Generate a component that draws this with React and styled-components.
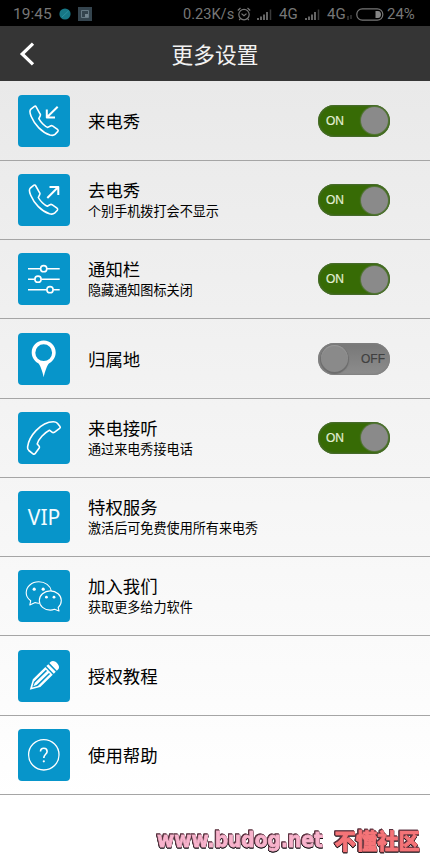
import React, { useState } from 'react';
import styled, { createGlobalStyle } from 'styled-components';

const PHONE =
  'M16.5 11.4L12.9 14.2C11.6 15.3 11.8 18.2 13.2 21.5C16.5 29.5 24 37.5 32 40C34.5 40.7 36 40.3 37 39.4L39.9 36.4C40.4 35.6 40.3 35 39.5 34.4L34.5 30.9C33.8 30.5 33 30.6 32.4 31L29.8 32.4C27 31.5 22.5 27 20.8 23.7L22.3 20.6C22.6 20 22.5 19.4 22 18.8L18 11.7C17.6 11 17 11 16.5 11.4Z';

function Icon({ name }) {
  switch (name) {
    case 'incoming':
      return (
        <Glyph viewBox="0 0 52 52">
          <path d={PHONE} />
          <path strokeWidth="2" d="M39.7 11.7L29 22.2M28.8 14.5V22.4H37" />
        </Glyph>
      );
    case 'outgoing':
      return (
        <Glyph viewBox="0 0 52 52">
          <path d={PHONE} transform="translate(-.5 -.2)" />
          <path strokeWidth="2" d="M29.3 24L40 13.3M31.5 13H40.3V21" />
        </Glyph>
      );
    case 'sliders':
      return (
        <Glyph viewBox="0 0 52 52">
          <path d="M10 15.7H22.6M28.8 15.7H41.7M10 26.2H16.8M23.2 26.2H41.7M10 36.7H28.8M35.2 36.7H41.7" />
          <circle cx="25.7" cy="15.7" r="3.1" />
          <circle cx="20" cy="26.2" r="3.1" />
          <circle cx="32" cy="36.7" r="3.1" />
        </Glyph>
      );
    case 'pin':
      return (
        <Glyph viewBox="0 0 52 52">
          <path
            fill="#fff"
            fillRule="evenodd"
            stroke="none"
            d="M25.7 7.6C19 7.6 13.7 12.9 13.7 19.5C13.7 24.5 16.7 28.2 20.2 30.3C22.2 31.8 24.4 38.5 25.7 44.2C27 38.5 29.2 31.8 31.2 30.3C34.8 28.2 37.7 24.5 37.7 19.5C37.7 12.9 32.4 7.6 25.7 7.6ZM25.7 11.3A8.4 8.4 0 0 1 25.7 28.1A8.4 8.4 0 0 1 25.7 11.3Z"
          />
        </Glyph>
      );
    case 'answer':
      return (
        <Glyph viewBox="0 0 52 52">
          <path d="M35.3 9.8C29.8 9.8 23 13.4 18 18.6C13.4 23.4 10.3 29.6 9.6 34.8C9.4 36.4 9.8 37.6 10.8 38.5L15 41.8C16 42.5 16.6 42.3 17.2 41.5L21.2 36C21.7 35.2 21.6 34.7 21 34L19.2 32C20.4 27.2 26.3 20.8 31.4 18.2L34 20.2C34.8 20.8 35.5 20.8 36.3 20.3L41.6 16.4C42.4 15.8 42.5 15.2 42 14.4L39.4 11.3C38.4 10.2 37.2 9.8 35.3 9.8Z" />
        </Glyph>
      );
    case 'wechat':
      return (
        <Glyph viewBox="0 0 52 52" $thin>
          <path d="M21 33.2C19.5 33.3 18.3 33 17.2 32.6L11.8 35L12.7 30.8C9.9 28.8 8.2 26 8.2 22.8C8.2 16.6 13.8 11.8 20.7 11.8C27.2 11.8 32.4 15.7 33.3 20.9" />
          <path d="M32.3 20.9C26.2 20.9 21.3 25.2 21.3 30.6C21.3 36 26.2 40.1 32.3 40.1C33.9 40.1 35.2 39.8 36.5 39.3L41 41L40.2 37.5C42.2 35.8 43.3 33.4 43.3 30.6C43.3 25.2 38.4 20.9 32.3 20.9Z" />
          <g fill="#fff" stroke="none">
            <circle cx="16.2" cy="19.2" r="1.6" />
            <circle cx="25.2" cy="19.2" r="1.6" />
            <circle cx="28.4" cy="27.2" r="1.4" />
            <circle cx="36" cy="27.2" r="1.4" />
          </g>
        </Glyph>
      );
    case 'pencil':
      return (
        <Glyph viewBox="0 0 52 52">
          <g transform="translate(11.8 39.8) rotate(-44.5)" stroke="none">
            <path fill="#fff" d="M0 0L9.5 -5.3H27V5.3H9.5ZM28.4 -5.3H31.2V5.3H28.4ZM32.7 -5.3H35C39.3 -4.6 39.3 4.6 35 5.3H32.7Z" />
            <path fill="#0795ca" d="M8.5 -2.9H25.5V-1.4H8.5L5 0L8.5 1.4H25.5V2.9H8.5L3.4 0Z" />
          </g>
        </Glyph>
      );
    case 'help':
      return (
        <Glyph viewBox="0 0 52 52">
          <circle cx="25.8" cy="25.8" r="15.2" strokeWidth="1.3" />
          <path d="M22.5 22.6C22.5 20.4 23.9 19.3 25.8 19.3C27.7 19.3 29.1 20.5 29.1 22.4C29.1 25.2 25.8 25.4 25.8 29" />
          <circle cx="25.8" cy="32.3" r="1.1" fill="#fff" stroke="none" />
        </Glyph>
      );
    default:
      return null;
  }
}

const items = [
  { icon: 'incoming', title: '来电秀', on: true },
  { icon: 'outgoing', title: '去电秀', sub: '个别手机拨打会不显示', on: true },
  { icon: 'sliders', title: '通知栏', sub: '隐藏通知图标关闭', on: true },
  { icon: 'pin', title: '归属地', on: false },
  { icon: 'answer', title: '来电接听', sub: '通过来电秀接电话', on: true },
  { icon: 'vip', title: '特权服务', sub: '激活后可免费使用所有来电秀' },
  { icon: 'wechat', title: '加入我们', sub: '获取更多给力软件' },
  { icon: 'pencil', title: '授权教程' },
  { icon: 'help', title: '使用帮助' },
];

function Signal() {
  return (
    <svg width="16" height="11" viewBox="0 0 16 11">
      <path stroke="#777" strokeWidth="1.7" d="M1 11V9M4 11V7.5M7 11V5.5M10 11V3" />
      <path stroke="#3a3a3a" strokeWidth="1.5" d="M13.5 11V0.5" />
    </svg>
  );
}

function StatusBar() {
  return (
    <Status>
      <Clock>19:45</Clock>
      <svg width="12" height="12" viewBox="0 0 12 12">
        <circle cx="6" cy="6" r="5.6" fill="#177786" />
        <path stroke="#2a91a0" d="M3 9L9.5 3" />
      </svg>
      <Shot width="14" height="14" viewBox="0 0 14 14">
        <path fill="#34444e" d="M0 0H14V14H0Z" />
        <path fill="none" stroke="#667984" d="M3.5 3.5H10.5V10.5H3.5Z" />
        <path fill="#74858f" d="M7 7H10V10H7Z" />
      </Shot>
      <Right>
        <Speed>0.23K/s</Speed>
        <Alarm width="14" height="14" viewBox="0 0 14 14" fill="none" stroke="#777" strokeWidth="1.2">
          <circle cx="7" cy="7.6" r="5.2" />
          <path d="M4.5 6.6L7 8.7L9.5 6.6M.8 3.5L3.5 1M13.2 3.5L10.5 1M3.2 11.8L2.2 13M10.8 11.8L11.8 13" />
        </Alarm>
        <Signal />
        <Net $w={26}>4G</Net>
        <Signal />
        <Net $w={20}>4G</Net>
        <Data width="5" height="5" viewBox="0 0 5 5">
          <path stroke="#555" d="M1 1V5M4 0V4" />
        </Data>
        <svg width="28" height="13" viewBox="0 0 28 13">
          <rect x=".8" y=".8" width="26" height="11.4" rx="5.5" fill="none" stroke="#777" strokeWidth="1.2" />
          <path fill="#858585" d="M19.5 3H22C26 3 26 10 22 10H19.5Z" />
        </svg>
        <Percent>24%</Percent>
      </Right>
    </Status>
  );
}

function Row({ item }) {
  const hasSwitch = item.on !== undefined;
  const [on, setOn] = useState(item.on);
  return (
    <Item>
      <Tile>{item.icon === 'vip' ? <Vip>VIP</Vip> : <Icon name={item.icon} />}</Tile>
      <Labels>
        <Title>{item.title}</Title>
        {item.sub && <Sub>{item.sub}</Sub>}
      </Labels>
      {hasSwitch && (
        <Switch type="button" role="switch" aria-checked={on} $on={on} onClick={() => setOn(!on)}>
          <SwitchText $on={on}>{on ? 'ON' : 'OFF'}</SwitchText>
          <Knob $on={on} />
        </Switch>
      )}
    </Item>
  );
}

function App() {
  return (
    <Page>
      <GlobalStyle />
      <StatusBar />
      <Header>
        <Back type="button" aria-label="返回">
          <svg width="16" height="24" viewBox="0 0 16 24">
            <path fill="none" stroke="#fff" strokeWidth="3.2" d="M14 1.6L3.2 12L14 22.4" />
          </svg>
        </Back>
        <Heading>更多设置</Heading>
      </Header>
      <List>
        {items.map(item => (
          <Row key={item.icon} item={item} />
        ))}
      </List>
      {/* Site mark in the bottom right corner */}
      <Mark>
        <Site>www.budog.net</Site>
        <Forum>不懂社区</Forum>
      </Mark>
    </Page>
  );
}

export default App;

const GlobalStyle = createGlobalStyle`
  * {
    box-sizing: border-box;
  }
  body {
    margin: 0;
    font-family: "Noto Sans", "Noto Sans CJK SC", sans-serif;
  }
  button {
    padding: 0;
    border: 0;
    background: none;
  }
  svg {
    display: block;
    flex: none;
  }
`;

const Page = styled.div`
  position: relative;
  display: flex;
  flex-direction: column;
  width: 430px;
  height: 860px;
  overflow: hidden;
  background: linear-gradient(#e9e9e9 81px, #fff 800px);
`;

const Status = styled.div`
  display: flex;
  align-items: center;
  flex: none;
  height: 26px;
  padding: 2px 14px 0 13px;
  background: #000;
  color: #777;
  font-family: Roboto, sans-serif;
  font-size: 15px;
  line-height: 24px;
  white-space: nowrap;
`;

const Clock = styled.span`
  width: 46px;
  font-size: 15.5px;
`;

const Shot = styled.svg`
  margin-left: 7px;
`;

const Right = styled.div`
  display: flex;
  align-items: center;
  margin-left: auto;
`;

const Speed = styled.span`
  width: 54px;
  font-size: 14.6px;
`;

const Alarm = styled.svg`
  margin-right: 6px;
`;

const Net = styled.span`
  width: ${props => props.$w}px;
  margin-left: 6px;
`;

const Data = styled.svg`
  margin: 6px 4px 0 0;
`;

const Percent = styled.span`
  width: 29px;
  margin-left: 3px;
`;

const Header = styled.header`
  display: grid;
  grid-template-columns: 60px 1fr 60px;
  align-items: center;
  flex: none;
  height: 55px;
  background: #353535;
`;

const Back = styled.button`
  padding-left: 19px;
`;

const Heading = styled.h1`
  margin: 2px 0 0;
  color: #f2f2f2;
  font-size: 21.7px;
  font-weight: 400;
  line-height: 30px;
  text-align: center;
`;

const List = styled.div`
  display: flex;
  flex-direction: column;
  padding-top: 0.5px;
`;

const Item = styled.div`
  display: flex;
  align-items: center;
  height: 79.25px;
  padding: 0.5px 40px 0 18px;
  border-bottom: 1px solid #a5a5a5;
`;

const Tile = styled.div`
  display: flex;
  align-items: center;
  justify-content: center;
  flex: none;
  width: 52px;
  height: 52px;
  border-radius: 4px;
  background: #0795ca;
`;

const Glyph = styled.svg`
  width: 52px;
  height: 52px;
  fill: none;
  stroke: #fff;
  stroke-width: ${props => (props.$thin ? 1.1 : 1.6)};
  stroke-linejoin: round;
`;

const Vip = styled.span`
  color: #f2fbff;
  font-size: 21px;
  line-height: 28px;
`;

const Labels = styled.div`
  flex: 1;
  margin-left: 18px;
  color: #000;
  white-space: nowrap;
`;

const Title = styled.div`
  font-size: 17.4px;
  line-height: 22px;
`;

const Sub = styled.div`
  font-size: 13.1px;
  line-height: 20px;
`;

const Switch = styled.button`
  display: flex;
  align-items: center;
  justify-content: space-between;
  flex-direction: ${props => (props.$on ? 'row' : 'row-reverse')};
  width: 72px;
  height: 32px;
  padding: ${props => (props.$on ? '0 2px 0 8px' : '0 5px 0 3px')};
  border-radius: 16px;
  background: ${props => (props.$on ? '#376b05' : 'linear-gradient(#777, #8d8d8d)')};
  box-shadow: inset 0 0 2px 1px ${props => (props.$on ? '#4b6b35' : '#808080')};
  cursor: pointer;
`;

const SwitchText = styled.span`
  color: ${props => (props.$on ? '#e2f0d5' : '#404040')};
  font-family: "Liberation Sans", sans-serif;
  font-size: 12px;
  -webkit-text-stroke: 0.2px currentColor;
`;

const Knob = styled.span`
  width: 27px;
  height: 27px;
  border-radius: 50%;
  background: #8a8a8a;
  box-shadow: ${props =>
    props.$on ? '0 0 1px 1px #58763f' : '0 1px 1px 1px #6c6c6c, inset 0 1px 1px #999'};
`;

const Mark = styled.div`
  position: absolute;
  right: 10px;
  bottom: 6px;
  display: flex;
  align-items: center;
  justify-content: space-between;
  width: 263px;
  height: 28px;
  line-height: 26px;
  white-space: nowrap;
  filter: drop-shadow(0.6px 0.6px 0 #1c1015) drop-shadow(-0.5px -0.5px 0 #5c3240)
    drop-shadow(0.8px 1px 0 #151015);
`;

const Site = styled.span`
  color: #f8b3cc;
  font-family: "DejaVu Sans Condensed", "DejaVu Sans", sans-serif;
  font-size: 20.8px;
  font-stretch: condensed;
  font-weight: 700;
  -webkit-text-stroke: 0.8px #f8b3cc;
`;

const Forum = styled.span`
  color: #f47478;
  font-family: "Noto Sans CJK SC", sans-serif;
  font-size: 21.4px;
  font-weight: 900;
  -webkit-text-stroke: 0.8px #f47478;
`;
